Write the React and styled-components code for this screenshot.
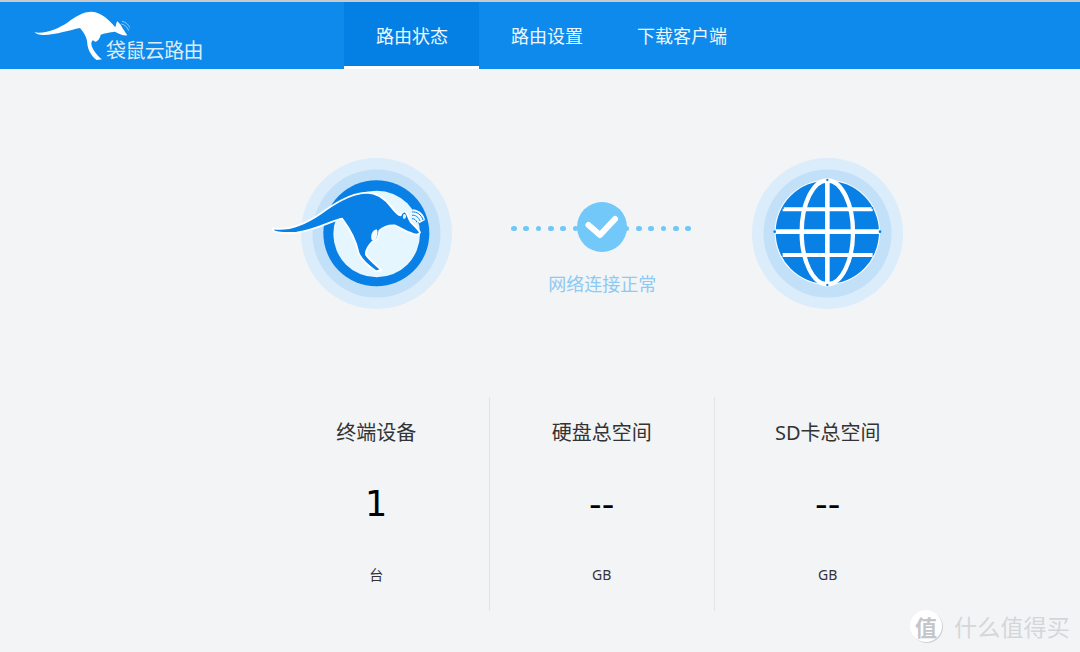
import React from "react";
import styled, { createGlobalStyle } from "styled-components";

const GlobalStyle = createGlobalStyle`
  html, body {
    margin: 0;
    padding: 0;
    background: #f3f4f6;
  }
  body {
    font-family: "Noto Sans", "Noto Sans CJK SC", sans-serif;
    width: 1080px;
    height: 652px;
    overflow: hidden;
    position: relative;
  }
`;

const Header = styled.header`
  display: flex;
  height: 67px;
  background: #0d8aec;
  border-top: 2px solid #c8cacc;
`;
const LogoBox = styled.div`
  position: relative;
  width: 344px;
  flex: none;
`;
const LogoMark = styled.svg`
  position: absolute;
  left: 0;
  top: -2px;
  width: 130px;
  height: 69px;
`;
const LogoText = styled.span`
  position: absolute;
  left: 106px;
  top: 36px;
  font-size: 20px;
  line-height: 26px;
  letter-spacing: -0.6px;
  color: #fff;
  opacity: 0.85;
  white-space: nowrap;
`;
const Nav = styled.nav`
  display: flex;
`;
const Tab = styled.a`
  display: flex;
  align-items: center;
  box-sizing: border-box;
  height: 67px;
  padding: 1px ${(p) => p.$right ?? 32}px 0 32px;
  font-size: 18px;
  color: #eef7ff;
  background: ${(p) => (p.$active ? "#0480e4" : "transparent")};
  border-bottom: 3px solid ${(p) => (p.$active ? "#fff" : "transparent")};
`;

const Main = styled.main`
  padding-left: 264px;
`;
const Grid = styled.div`
  display: grid;
  grid-template-columns: repeat(3, 225.5px);
`;
const StatusRow = styled(Grid)`
  padding-top: 89px;
  height: 151px;
`;
const Halo = styled.div`
  justify-self: center;
  width: 151px;
  height: 151px;
  position: relative;
`;
const HaloArt = styled.svg`
  position: absolute;
  overflow: visible;
  left: 0;
  top: 0;
`;
const Connection = styled.div`
  display: flex;
  flex-direction: column;
  align-items: center;
  padding-top: 44px;
`;
const Line = styled.div`
  display: flex;
  align-items: center;
  margin-right: 2.5px;
`;
const DotRun = styled.div`
  display: flex;
  gap: 6.8px;
  margin: 3px ${(p) => (p.$side === "left" ? "-1.5px" : "0")} 0 ${(p) => (p.$side === "left" ? "0" : "-2.8px")};
`;
const Dot = styled.i`
  display: block;
  width: 5.5px;
  height: 5.5px;
  border-radius: 50%;
  background: #6fc8f8;
`;
const CheckBadge = styled.div`
  position: relative;
  width: 50px;
  height: 50px;
  border-radius: 50%;
  background: #72c8f8;
`;
const ConnectionText = styled.div`
  margin-top: 20px;
  font-size: 18px;
  line-height: 24px;
  color: #8cc9f3;
`;

const StatsRow = styled(Grid)`
  margin-top: 88px;
  height: 214px;
`;
const Stat = styled.div`
  display: flex;
  flex-direction: column;
  align-items: center;
  border-right: ${(p) => (p.$last ? "none" : "1px solid #e3e4e6")};
`;
const StatTitle = styled.div`
  margin-top: 22px;
  font-size: 20px;
  line-height: 28px;
  color: #333;
`;
const StatValue = styled.div`
  margin-top: 36px;
  font-family: "DejaVu Sans", sans-serif;
  font-size: 35px;
  line-height: 42px;
  color: #000;
`;
const StatUnit = styled.div`
  margin-top: 40px;
  font-size: 14px;
  line-height: 20px;
  color: #333;
`;

const Watermark = styled.div`
  position: absolute;
  left: 910px;
  top: 609px;
  display: flex;
  align-items: center;
  gap: 12px;
  color: #d5d6d9;
`;
const WatermarkBadge = styled.div`
  width: 32px;
  height: 32px;
  border-radius: 50%;
  background: #fff;
  box-shadow: 1px 1px 0 #cfd0d3;
  display: flex;
  align-items: center;
  justify-content: center;
  font-size: 22px;
  font-weight: 700;
  color: #c4c5c8;
`;
const WatermarkText = styled.div`
  font-size: 23px;
  letter-spacing: 0.2px;
  white-space: nowrap;
`;

const Rings = () => (
  <>
    <circle cx="75.5" cy="75.5" r="75.5" fill="#dbecfb" />
    <circle cx="75.5" cy="75.5" r="64" fill="#c3e0f9" />
  </>
);

const KangarooIcon = () => (
  <HaloArt width="200" height="165" viewBox="0 0 600 495" style={{ left: -41, top: -8 }}>
    <circle cx="349" cy="250" r="159" fill="#0880e6" />
    <circle cx="350" cy="252" r="130" fill="#e5f6ff" />
    <path
      d="M38 235 C80 242 130 226 180 192 C220 163 265 132 320 128 C352 128 378 150 395 172 C405 185 415 195 422 196 C425 186 434 180 440 190 C444 198 447 208 452 216 C462 226 476 238 480 248 C476 256 462 254 450 248 C435 243 420 232 404 226 C385 225 368 232 358 242 C358 258 350 274 338 274 C328 284 316 298 318 314 C332 334 350 346 364 360 L348 364 C328 350 306 332 296 310 C290 280 272 240 246 206 C220 210 170 240 110 248 C80 250 55 248 42 244 Z"
      fill="#0880e6"
      stroke="#fff"
      strokeWidth="5.5"
      strokeLinejoin="round"
    />
    <path d="M335 270 C330 255 338 240 350 238 C356 248 352 264 342 272 Z" fill="#f2fbff" />
    <path d="M430 206 C426 196 432 188 437 194 C440 200 436 208 430 206 Z" fill="#e5f6ff" />
    <path d="M452 192 L460 178 C478 180 492 194 495 210 L478 220 Z" fill="#f2fbff" />
    <g fill="none" stroke="#0880e6" strokeWidth="3">
      <path d="M456 186 C470 184 484 194 489 210" />
      <path d="M456 196 C466 194 476 202 480 213" />
      <path d="M456 206 C462 205 468 210 471 217" />
    </g>
  </HaloArt>
);

const GlobeIcon = () => (
  <HaloArt width="151" height="151" viewBox="0 0 453 453">
    <circle cx="226" cy="223" r="158" fill="#fff" />
    <circle cx="226" cy="223" r="155" fill="#0880e6" />
    <g fill="none" stroke="#fff">
      <ellipse cx="226" cy="223" rx="77" ry="156" strokeWidth="13" />
      <path d="M226 66 V380" strokeWidth="14" />
      <path d="M70 221 H382" strokeWidth="14" />
      <path d="M92 154 H362" strokeWidth="12" />
      <path d="M92 291 H362" strokeWidth="12" />
    </g>
    <g fill="#0880e6">
      <circle cx="68" cy="221" r="4" />
      <circle cx="384" cy="221" r="4" />
      <circle cx="226" cy="66" r="3.5" />
      <circle cx="226" cy="381" r="3.5" />
      <circle cx="93" cy="150" r="3" />
      <circle cx="361" cy="150" r="3" />
    </g>
  </HaloArt>
);

const App = () => {
  const run = [0, 1, 2, 3, 4, 5];
  const stats = [
    { title: "终端设备", value: "1", unit: "台" },
    { title: "硬盘总空间", value: "--", unit: "GB" },
    { title: "SD卡总空间", value: "--", unit: "GB" }
  ];
  return (
    <>
      <GlobalStyle />
      <Header>
        <LogoBox>
          <LogoMark viewBox="0 0 390 207">
            <path
              d="M103 97 C140 102 175 86 205 66 C225 50 250 35 275 35 C305 37 330 62 346 82 C348 74 350 66 352 64 L362 74 C368 86 376 96 382 106 C370 108 355 100 345 95 C330 96 312 100 302 104 C300 114 294 124 286 125 C278 122 280 116 274 128 C272 142 290 166 306 178 L290 180 C274 168 264 150 262 132 C262 112 250 96 240 84 C210 90 170 104 130 105 C118 105 108 102 103 97 Z"
              fill="#fff"
            />
            <g fill="none" stroke="#cfe8fb" strokeWidth="2">
              <path d="M366 64 C378 66 388 76 392 88" />
              <path d="M364 72 C374 74 382 80 386 92" />
            </g>
          </LogoMark>
          <LogoText>袋鼠云路由</LogoText>
        </LogoBox>
        <Nav>
          <Tab $active $right={31}>路由状态</Tab>
          <Tab $right={22}>路由设置</Tab>
          <Tab>下载客户端</Tab>
        </Nav>
      </Header>
      <Main>
        <StatusRow>
          <Halo>
            <HaloArt width="151" height="151" viewBox="0 0 151 151">
              <Rings />
            </HaloArt>
            <KangarooIcon />
          </Halo>
          <Connection>
            <Line>
              <DotRun $side="left">{run.map((i) => <Dot key={i} />)}</DotRun>
              <CheckBadge>
                <svg width="50" height="50" viewBox="0 0 50 50">
                  <path
                    d="M11.5 23 L23 33 L38 17"
                    fill="none"
                    stroke="#fff"
                    strokeWidth="6"
                    strokeLinecap="round"
                    strokeLinejoin="round"
                  />
                </svg>
              </CheckBadge>
              <DotRun $side="right">{run.map((i) => <Dot key={i} />)}</DotRun>
            </Line>
            <ConnectionText>网络连接正常</ConnectionText>
          </Connection>
          <Halo>
            <HaloArt width="151" height="151" viewBox="0 0 151 151">
              <Rings />
            </HaloArt>
            <GlobeIcon />
          </Halo>
        </StatusRow>
        <StatsRow>
          {stats.map((s, i) => (
            <Stat key={s.title} $last={i === 2}>
              <StatTitle>{s.title}</StatTitle>
              <StatValue>{s.value}</StatValue>
              <StatUnit>{s.unit}</StatUnit>
            </Stat>
          ))}
        </StatsRow>
      </Main>
      <Watermark>
        <WatermarkBadge>值</WatermarkBadge>
        <WatermarkText>什么值得买</WatermarkText>
      </Watermark>
    </>
  );
};

export default App;
